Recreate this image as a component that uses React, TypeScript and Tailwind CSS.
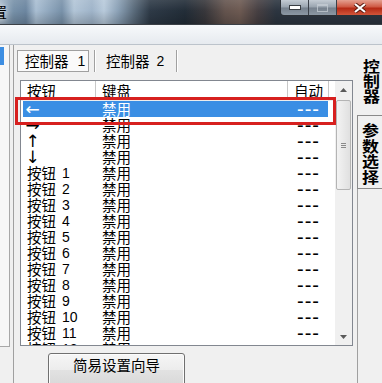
import React from "react";

interface KeyRow {
  label: string;
  num?: number;
  arrow?: boolean;
}

// key list shown in the 控制器 1 tab
const rows: KeyRow[] = [
  { label: "←", arrow: true },
  { label: "→", arrow: true },
  { label: "↑", arrow: true },
  { label: "↓", arrow: true },
  ...Array.from({ length: 12 }, (_, i) => ({ label: "按钮", num: i + 1 })),
];

const TitleBar: React.FC = () => (
  <div className="flex h-[24px] shrink-0 items-start justify-between bg-[linear-gradient(180deg,rgba(255,255,255,0.10),rgba(0,0,0,0)_45%,rgba(0,0,0,0.18)),linear-gradient(90deg,#a3b6c8_0px,#7690a8_14px,#6c86a0_26px,#a9bed2_36px,#8aa2b9_52px,#7891a9_62px,#b2c5d7_74px,#9fb4c9_92px,#b8cadb_104px,#8ba1b6_118px,#5a6b7b_134px,#2e3a47_150px,#222d38_185px,#38373b_205px,#64544e_225px,#6d5a52_240px,#463f42_258px,#2c3540_276px,#2c3540_100%)]">
    <span className="ml-[-8px] pt-[3px] text-[15px] leading-[18px] text-black [text-shadow:0_0_6px_#ffffff]">置</span>
    <div className="flex h-[16px] overflow-hidden rounded-bl-[4px] border-b border-l border-[#2c3137]">
      <div className="flex w-[28px] items-center justify-center border-r border-[#3a4048] bg-[linear-gradient(180deg,#c4ccd4,#98a3ae_48%,#75808c_52%,#8c98a4)]">
        <div className="h-[5px] w-[12px] border border-[#3a3f44] bg-white" />
      </div>
      <div className="flex w-[28px] items-center justify-center border-r border-[#3a4048] bg-[linear-gradient(180deg,#c4ccd4,#98a3ae_48%,#75808c_52%,#8c98a4)]">
        <div className="h-[8px] w-[11px] border border-t-2 border-[#c9d0d7] opacity-70" />
      </div>
      <div className="flex w-[45px] items-center justify-center bg-[linear-gradient(180deg,#e4a090_0%,#cf5a45_45%,#b52a15_55%,#d2563a_100%)]">
        <svg width="14" height="10" viewBox="0 0 14 10">
          <path d="M2 1 L12 9 M12 1 L2 9" stroke="#5a1a10" strokeWidth="4" />
          <path d="M2 1 L12 9 M12 1 L2 9" stroke="#ffffff" strokeWidth="2.2" />
        </svg>
      </div>
    </div>
  </div>
);

const ScrollBar: React.FC = () => (
  <div className="flex w-[17px] shrink-0 flex-col bg-[#f0f0f0]">
    <div className="flex h-[17px] items-center justify-center">
      <svg width="7" height="4" viewBox="0 0 7 4">
        <path d="M0 4 L3.5 0 L7 4Z" fill="#5a5a5a" />
      </svg>
    </div>
    <div className="mx-[1px] mt-[2px] flex h-[90px] flex-col items-center justify-center gap-[1px] rounded-[2px] border border-[#b4b4b4] bg-[linear-gradient(90deg,#f3f3f3,#e0e0e0)]">
      <div className="h-[1px] w-[5px] bg-[#8a8a8a]" />
      <div className="h-[1px] w-[5px] bg-[#8a8a8a]" />
      <div className="h-[1px] w-[5px] bg-[#8a8a8a]" />
    </div>
    <div className="flex-1" />
    <div className="flex h-[17px] items-center justify-center">
      <svg width="7" height="4" viewBox="0 0 7 4">
        <path d="M0 0 L3.5 4 L7 0Z" fill="#5a5a5a" />
      </svg>
    </div>
  </div>
);

const KeyList: React.FC = () => (
  <div className="ml-[6px] mt-[8px] flex h-[266px] w-[333px] shrink-0 border border-[#828790] bg-white">
    <div className="flex flex-1 flex-col overflow-hidden">
      <div className="flex h-[20px] shrink-0 border-b border-[#ececec] leading-[19px]">
        <div className="w-[75px] border-r border-[#c8c8c8] pl-[6px]">按钮</div>
        <div className="w-[192px] border-r border-[#c8c8c8] pl-[6px]">键盘</div>
        <div className="w-[41px] border-r border-[#c8c8c8] pl-[6px]">自动</div>
      </div>
      {rows.map((row, index) => {
        const selected = index === 0;
        return (
          <div
            key={index}
            className={`ml-[2px] flex h-[16px] w-[305px] shrink-0 leading-[16px] ${
              selected ? "bg-[#3a8ee4] text-white" : "text-black"
            }`}
          >
            <div className="flex w-[73px] pl-[2px]">
              {row.arrow ? (
                <span className="w-[15px] text-center font-['DejaVu_Sans',sans-serif] text-[17px]">{row.label}</span>
              ) : (
                <>
                  <span className="ml-[2px]">{row.label}</span>
                  <span className="ml-[6px] font-['Liberation_Sans',sans-serif] text-[14px]">{row.num}</span>
                </>
              )}
            </div>
            <div className="w-[192px] pl-[6px]">禁用</div>
            <div className="w-[40px] pl-[9px] font-['Liberation_Sans',sans-serif] text-[20px] tracking-[1px]">---</div>
          </div>
        );
      })}
    </div>
    <ScrollBar />
  </div>
);

export default function App() {
  return (
    <div className="relative flex h-[383px] w-[382px] flex-col overflow-hidden bg-[#f0f0f0] font-['Noto_Sans_CJK_SC',sans-serif] text-[14.5px] text-black">
      <TitleBar />
      <div className="h-[21px] shrink-0 border-t border-b border-t-[#3b4046] border-b-[#bcc3cb] bg-[linear-gradient(180deg,#f7f9fb,#e6eaef)]" />

      <div className="flex flex-1">
        {/* left pane edge */}
        <div className="flex w-[14px] shrink-0">
          <div className="h-[302px] w-[10px] border-r border-b border-[#a8a8a8] bg-[#f7f7f7] pt-[2px]">
            <div className="h-[18px] w-[4px] bg-[#3d8ee2]" />
          </div>
          <div className="w-[3px]" />
          <div className="w-[1px] bg-[#a0a0a0]" />
        </div>

        {/* controller page */}
        <div className="flex w-[341px] shrink-0 flex-col">
          <div className="ml-[3px] mt-[5px] flex h-[22px] shrink-0">
            <div className="flex w-[72px] items-center border border-[#a0a0a0] bg-[#fafafa] pl-[7px] leading-[16px]">
              控制器<span className="ml-[9px] font-['Liberation_Sans',sans-serif] text-[14px]">1</span>
            </div>
            <div className="ml-[5px] w-[1px] bg-[#a0a0a0]" />
            <div className="w-[1px] bg-white" />
            <div className="flex w-[80px] items-center pl-[10px] leading-[16px]">
              控制器<span className="ml-[7px] font-['Liberation_Sans',sans-serif] text-[14px]">2</span>
            </div>
            <div className="w-[1px] bg-[#a0a0a0]" />
            <div className="w-[1px] bg-white" />
          </div>

          <KeyList />

          <button className="ml-[34px] mt-[7px] flex h-[34px] w-[137px] shrink-0 justify-center rounded-[3px] border border-[#707070] bg-[linear-gradient(180deg,#f6f6f6,#ececec_50%,#e2e2e2_50%,#d8d8d8)] pt-[3px] leading-[16px] text-black shadow-[inset_0_0_0_1px_#fcfcfc]">
            简易设置向导
          </button>
        </div>

        {/* vertical tabs */}
        <div className="flex w-[27px] shrink-0 flex-col">
          <div className="flex h-[70px] shrink-0 origin-left scale-x-[1.13] flex-col pl-[7px] pt-[13px] text-[15px] font-bold leading-[15px]">
            <span>控</span>
            <span>制</span>
            <span>器</span>
          </div>
          <div className="ml-[2px] flex h-[74px] shrink-0 flex-col border-y border-l border-[#8a8a8a] pl-[4px] pt-[6px] text-[15px] font-bold leading-[15.5px]">
            <span className="origin-left scale-x-[1.13]">参</span>
            <span className="origin-left scale-x-[1.13]">数</span>
            <span className="origin-left scale-x-[1.13]">选</span>
            <span className="origin-left scale-x-[1.13]">择</span>
          </div>
          <div className="ml-[2px] flex-1 border-l border-[#a0a0a0]" />
        </div>
      </div>

      {/* red highlight around the first row */}
      <div className="absolute left-[15px] top-[97px] h-[28px] w-[321px] border-[3px] border-[#d7201f]" />
    </div>
  );
}
